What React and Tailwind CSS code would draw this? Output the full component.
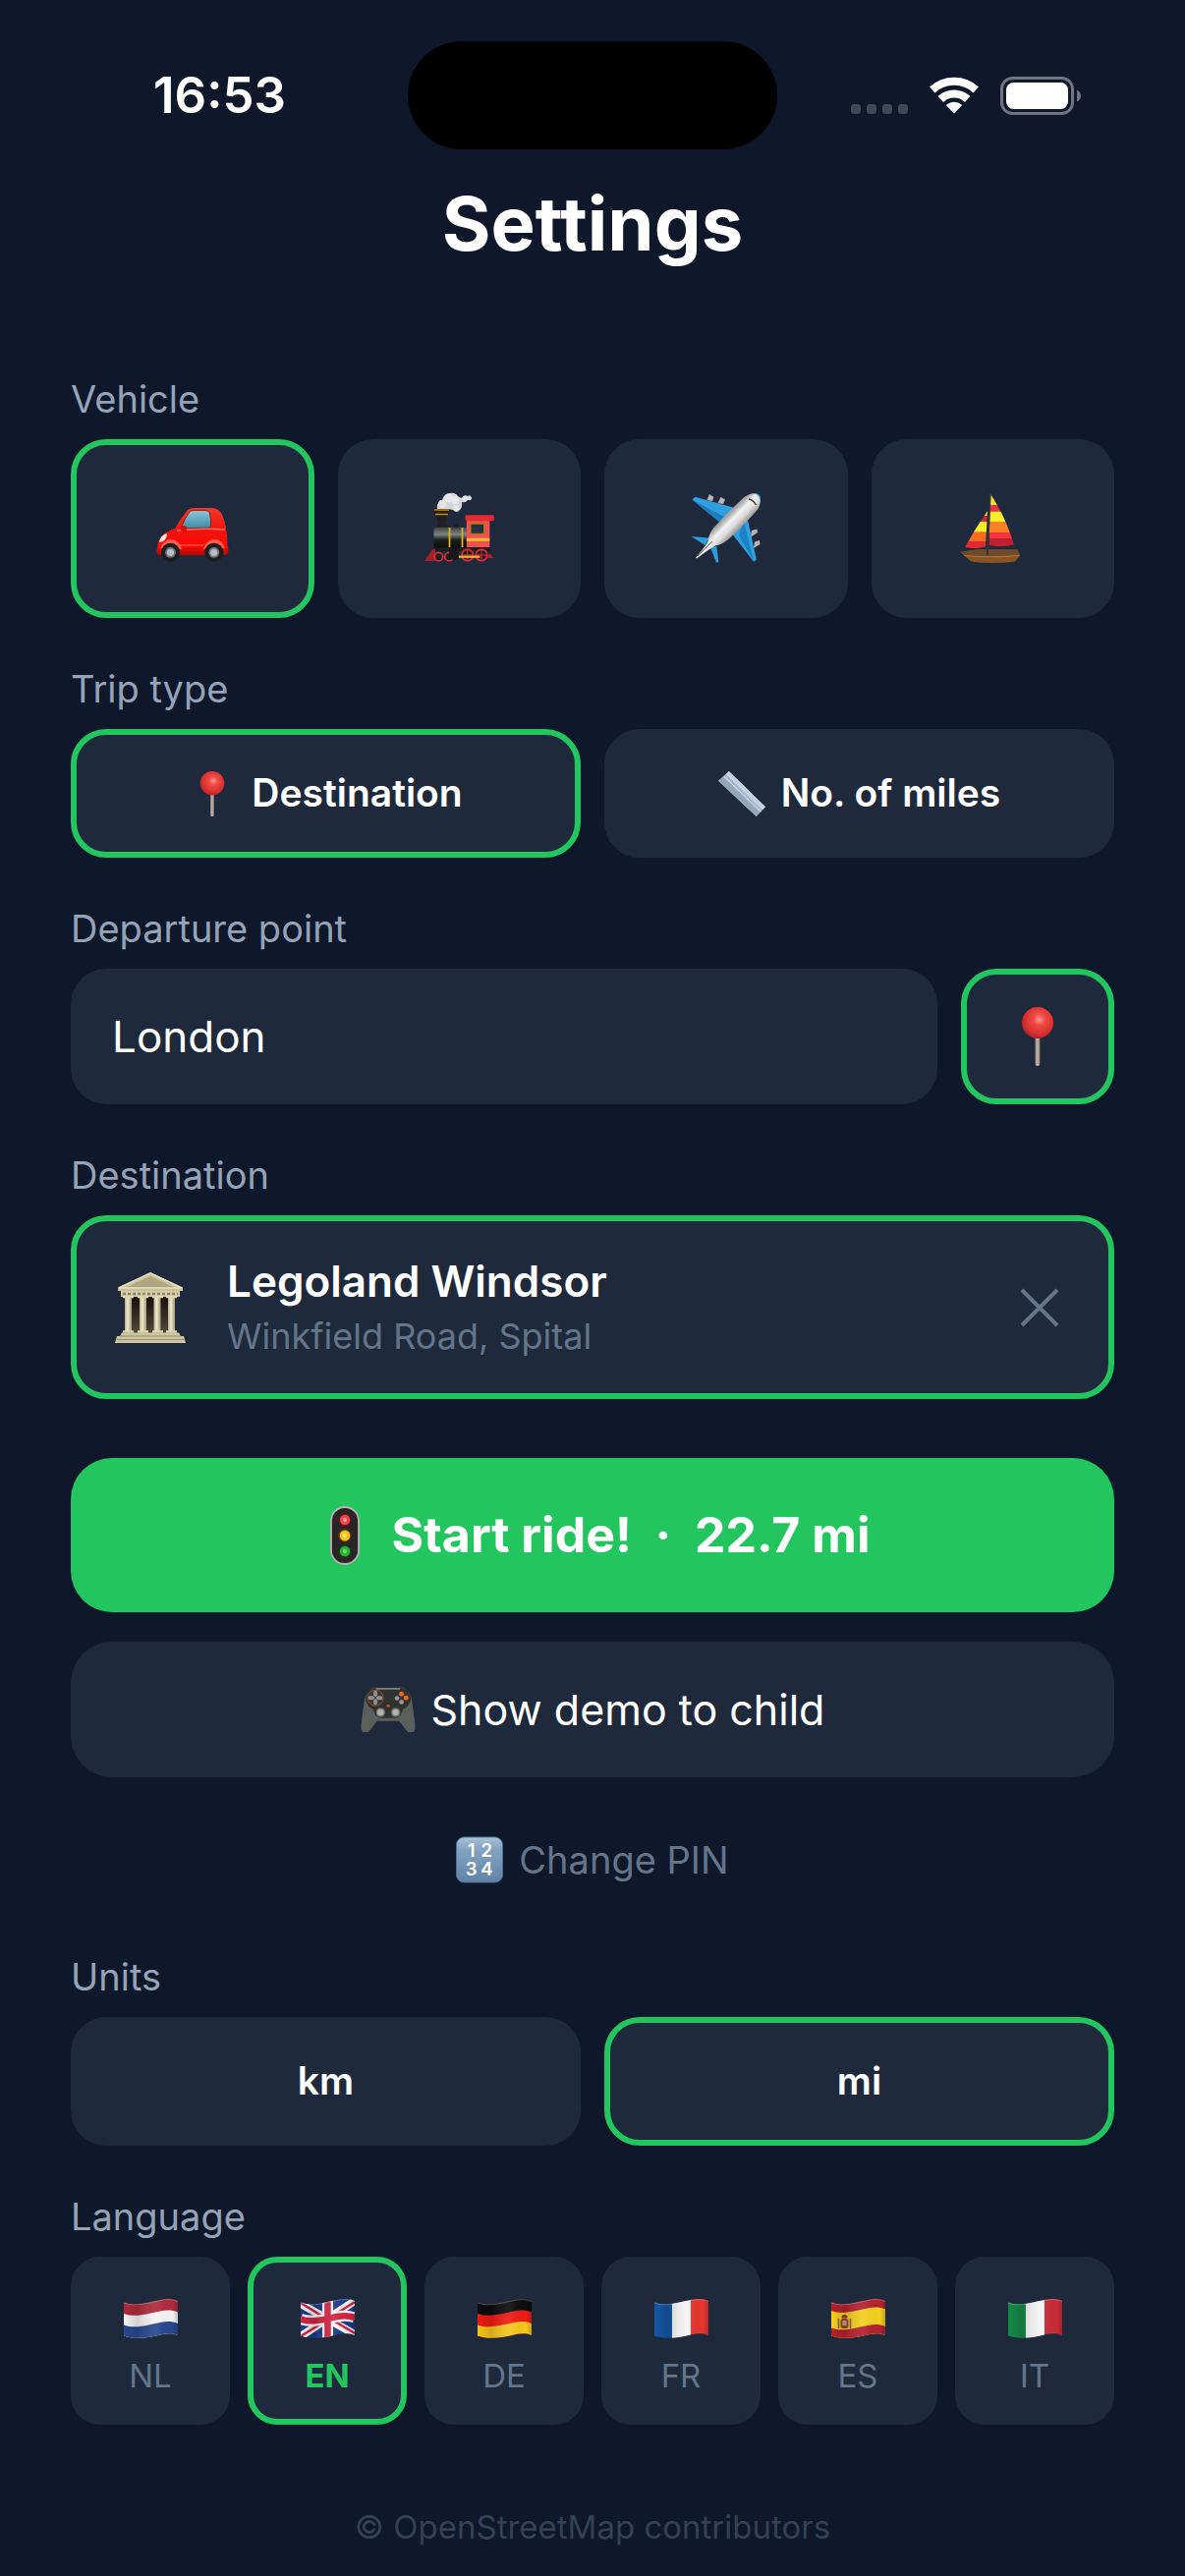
import React, { useState } from 'react';

// wavy top edge of a flag, shifted down by y
const wave = (y) => `M0 ${y + 3.5}C12 ${y + 8} 27 ${y + 3} 38 ${y + 0.8}C45 ${y - 0.5} 50 ${y} 55 ${y + 2}`;

const CarIcon = () => (
  <svg viewBox="0 0 74 74" className="h-[74px] w-[74px]" aria-hidden="true">
    <defs>
      <linearGradient id="carBody" x1="0" y1="0" x2="0" y2="1">
        <stop offset="0" stopColor="#f4382c" />
        <stop offset="0.45" stopColor="#f0140c" />
        <stop offset="0.8" stopColor="#fb0a04" />
        <stop offset="1" stopColor="#b80500" />
      </linearGradient>
      <linearGradient id="carGlass" x1="0" y1="0" x2="0" y2="1">
        <stop offset="0" stopColor="#8fc6d8" />
        <stop offset="1" stopColor="#3d8ba6" />
      </linearGradient>
    </defs>
    <path d="M65 20Q69 26 71 37L64 36Z" fill="#4f9fba" />
    <path d="M19 37Q25 26 32 18Q34 16 40 16H56Q64 16 67 23Q70 30 71 37Q72.500 45 72.500 54Q74 58 73 62Q72 64 67 64H4Q0 64 0.500 59Q1 54 2.500 49Q6 41 19 37Z" fill="url(#carBody)" />
    <path d="M25 37Q29 26 34 20Q35 18.500 38 18.500H50Q53.500 18.500 54.300 21Q56 28 55.500 34Q55.500 36 53 36.200Z" fill="url(#carGlass)" stroke="#7d0f0a" strokeWidth="0.800" />
    <path d="M21 39Q45 36 70 38" stroke="#ff8276" strokeWidth="1.500" fill="none" opacity="0.800" />
    <path d="M24 54H48" stroke="#ff6a58" strokeWidth="1" />
    <path d="M3 51Q4 44 11 42Q11 47 7 50Z" fill="#ffe8e0" />
    <path d="M4 57Q8 48 15 48Q23 48 26 58ZM48 58Q51 48 59 48Q67 48 70 57Z" fill="#ff5a4a" />
    <rect x="25" y="34" width="6" height="6" rx="2.500" fill="#d90e08" />
    <circle cx="14.500" cy="61.300" r="9.600" fill="#1b1d20" />
    <circle cx="14.500" cy="61.300" r="5.500" fill="#6e7276" />
    <circle cx="14.500" cy="61.300" r="3.600" fill="#b9bcc0" />
    <circle cx="58.800" cy="61.300" r="9.600" fill="#1b1d20" />
    <circle cx="58.800" cy="61.300" r="5.500" fill="#6e7276" />
    <circle cx="58.800" cy="61.300" r="3.600" fill="#b9bcc0" />
  </svg>
);

const TrainIcon = () => (
  <svg viewBox="0 0 74 74" className="h-[74px] w-[74px]" aria-hidden="true">
    <defs>
      <linearGradient id="boiler" x1="0" y1="0" x2="0" y2="1">
        <stop offset="0" stopColor="#3c4140" />
        <stop offset="0.35" stopColor="#7b8280" />
        <stop offset="0.6" stopColor="#1c1f1f" />
        <stop offset="1" stopColor="#0b0c0c" />
      </linearGradient>
    </defs>
    <path d="M15 17Q14 10 20 8Q22 1 28 1Q33 0 36 4Q39 7 42 5Q43 2 46 4Q49 2 50 6Q50 9 46 8Q44 11 40 10Q41 15 38 18Q35 22 31 18L26 17Z" fill="#d6d7dc" />
    <g fill="#e6e7ea">
      <circle cx="27" cy="6" r="4.500" />
      <circle cx="33" cy="8" r="4" />
      <circle cx="20" cy="12" r="4" />
      <circle cx="34" cy="16" r="3" />
      <circle cx="43" cy="6" r="2.500" />
      <circle cx="48" cy="6" r="1.500" />
    </g>
    <path d="M12 17H27V22L25 24L23.300 31L25 36H14.500L16 31L14 24L12 22Z" fill="#1d1e1d" />
    <path d="M12 18H27M13 22.500H26" stroke="#c78f1d" strokeWidth="1.300" />
    <rect x="32" y="32" width="5" height="5" rx="2" fill="#1e2020" />
    <rect x="11.500" y="35.700" width="34" height="21" rx="2" fill="url(#boiler)" />
    <path d="M27.500 36V56M40.500 36V56" stroke="#e3b01f" strokeWidth="1.800" />
    <path d="M44.800 28H68.300V56H44.800Z" fill="#f0504f" />
    <rect x="43.700" y="23.300" width="29" height="6" rx="1" fill="#e02b33" />
    <rect x="48.800" y="32" width="14" height="10.500" rx="1.500" fill="#26303c" stroke="#a87818" strokeWidth="1.500" />
    <path d="M44.800 48.300H68.300" stroke="#f4bd2b" strokeWidth="3" />
    <path d="M12 56.500H70V60H12Z" fill="#1f1d1e" />
    <path d="M10 58L2 70H13V58Z" fill="#a3202a" />
    <path d="M68 62L72.500 67H66Z" fill="#b5232c" />
    <g fill="#231a1c" stroke="#dd2f38" strokeWidth="1.700">
      <circle cx="16.500" cy="65.700" r="4.200" />
      <circle cx="27" cy="65.700" r="4.200" />
      <circle cx="45.800" cy="64" r="5.700" />
      <circle cx="60" cy="64" r="5.700" />
    </g>
    <path d="M45.800 58.500V69.500M40.500 64H51M60 58.500V69.500M54.500 64H65.500" stroke="#dd2f38" strokeWidth="1" />
    <rect x="27" y="56.500" width="9.500" height="12" rx="1" fill="#161718" />
    <path d="M37 65.700H58.500" stroke="#f0a722" strokeWidth="2.400" />
  </svg>
);

const PlaneIcon = () => (
  <svg viewBox="0 0 74 74" className="h-[74px] w-[74px]" aria-hidden="true">
    <defs>
      <linearGradient id="fuselage" x1="0.300" y1="0.300" x2="0.700" y2="0.700">
        <stop offset="0.3" stopColor="#a8a6a6" />
        <stop offset="0.45" stopColor="#f3f3f3" />
        <stop offset="0.6" stopColor="#dedddd" />
        <stop offset="0.8" stopColor="#8e8b8a" />
      </linearGradient>
    </defs>
    <g fill="#b9b4b1">
      <path d="M20 2L24.500 5L23 9L17.500 8Z" />
      <path d="M31.500 5L36 7.500L34 12L28.500 11Z" />
      <path d="M63 39L68.500 37.500L69 41L61.500 46Z" />
      <path d="M66 50.500L71 49L71.500 53L65 57Z" />
    </g>
    <path d="M2.500 7.500L5.500 4.800L45 15.700L31 31Z" fill="#2f9fdf" />
    <path d="M3 8L31 31L35 25Z" fill="#1b7fbd" />
    <path d="M59 28L67.800 68.300L65.200 71L42 41Z" fill="#2f9fdf" />
    <path d="M55 29L60 50L65 70L50 44Z" fill="#1b83c2" />
    <path d="M1.500 45L20 46.500L15.500 54Z" fill="#2b9bdc" />
    <path d="M21 56L27.300 55L29.300 71L27 71.800Z" fill="#2b9bdc" />
    <path d="M55.400 5Q64 -1 70 2.500Q74 8 69.500 17Q55 34 41 46.500Q34 53 26 54.500Q21 57 7 67.500L6.200 66.500Q17 54 18.500 50Q19 43 24 36.500Q39 20 55.400 5Z" fill="url(#fuselage)" />
    <path d="M66 1.200Q73 1.500 72 8Q70 3 66 1.200Z" fill="#2f9fdf" />
    <path d="M60 7Q65 8 67.500 13" stroke="#3b3f46" strokeWidth="1.500" fill="none" />
    <path d="M8 65L23 50" stroke="#77736f" strokeWidth="1" />
  </svg>
);

const BoatIcon = () => (
  <svg viewBox="0 0 74 74" className="h-[74px] w-[74px]" aria-hidden="true">
    <defs>
      <clipPath id="mainSail">
        <path d="M35 2Q50 24 59 53.500Q46 56.500 33.500 54Z" />
      </clipPath>
      <clipPath id="jib">
        <path d="M32 19Q20 36 9 56Q19 58.500 30 55.500Z" />
      </clipPath>
    </defs>
    <g clipPath="url(#mainSail)">
      <path d="M30 0H62V13.300H30Z" fill="#f4e22a" />
      <path d="M30 13H62V20H30Z" fill="#e53245" />
      <path d="M30 19.700H62V30H30Z" fill="#fbef2c" />
      <path d="M30 30H62V41H30Z" fill="#fb8124" />
      <path d="M30 41H62V47.500H30Z" fill="#f8333f" />
      <path d="M30 47.300H62V58H30Z" fill="#c11f30" />
    </g>
    <g clipPath="url(#jib)">
      <path d="M5 18H35V24H5Z" fill="#f0d82a" />
      <path d="M5 24H35V30H5Z" fill="#cf2836" />
      <path d="M5 30H35V40.700H5Z" fill="#f8ec2b" />
      <path d="M5 40.700H35V50H5Z" fill="#fa6a20" />
      <path d="M5 50H35V60H5Z" fill="#df2a33" />
    </g>
    <path d="M4.300 60.700L24 58L62.500 58.500L65 64.500L60 70.500Q38 73.500 15.300 70.500Z" fill="#8a5422" />
    <path d="M4.300 60.700L24 58L62.500 58.500L64 63.500Q34 66.500 8 64Z" fill="#6e4a2d" />
    <path d="M8 64.500Q34 67 64.500 64.500" stroke="#b0752f" strokeWidth="1.200" fill="none" />
    <path d="M34.800 2L31.800 64" stroke="#33343a" strokeWidth="1.800" />
  </svg>
);

const PinIcon = ({ className }) => (
  <svg viewBox="0 0 32 60" className={className} aria-hidden="true">
    <defs>
      <radialGradient id="pinHead" cx="0.550" cy="0.400" r="0.600">
        <stop offset="0" stopColor="#ff9a90" />
        <stop offset="0.3" stopColor="#f14b45" />
        <stop offset="0.75" stopColor="#d8312f" />
        <stop offset="1" stopColor="#b02328" />
      </radialGradient>
      <linearGradient id="pinNeedle" x1="0" x2="1">
        <stop offset="0" stopColor="#8f7f78" />
        <stop offset="0.5" stopColor="#c9b7ac" />
        <stop offset="1" stopColor="#7c6c66" />
      </linearGradient>
    </defs>
    <rect x="13.500" y="28" width="5" height="32" rx="2" fill="url(#pinNeedle)" />
    <circle cx="16" cy="16" r="16" fill="url(#pinHead)" />
  </svg>
);

const RulerIcon = () => (
  <svg viewBox="0 0 49 47" className="h-12 w-12" aria-hidden="true">
    <path d="M11 0L49 37L39.500 47L0 10Z" fill="#a9b9cc" />
    <path d="M11 0L49 37L46 40L8 3Z" fill="#c5d2e0" />
    <path d="M5 6L43 43L39.500 47L0 10Z" fill="#94a6bb" />
    <path d="M6 5.500L44.500 42" stroke="#d6e0ea" strokeWidth="1" />
  </svg>
);

const MuseumIcon = () => (
  <svg viewBox="0 0 72 72" className="h-[72px] w-[72px] shrink-0" aria-hidden="true">
    <defs>
      <linearGradient id="column" x1="0" x2="1">
        <stop offset="0" stopColor="#b3ab86" />
        <stop offset="0.4" stopColor="#efead0" />
        <stop offset="1" stopColor="#a59c78" />
      </linearGradient>
      <linearGradient id="interior" x1="0" y1="0" x2="0" y2="1">
        <stop offset="0" stopColor="#15100c" />
        <stop offset="1" stopColor="#55483a" />
      </linearGradient>
    </defs>
    <path d="M12 25H60V62H12Z" fill="url(#interior)" />
    <path d="M36 0L69 15.500V19H3V15.500Z" fill="#c9c19b" />
    <path d="M36 4L60 15.500H12Z" fill="#b0a780" />
    <path d="M36 1L68 16H4Z" fill="none" stroke="#e6dfc0" strokeWidth="1.500" />
    <path d="M6 19H66V25H6Z" fill="#d6cea9" />
    <path d="M8 22H64" stroke="#8d8562" strokeWidth="2.500" strokeDasharray="3 2" />
    <rect x="10" y="25" width="7" height="36" fill="url(#column)" />
    <rect x="25" y="25" width="7" height="36" fill="url(#column)" />
    <rect x="39.500" y="25" width="7" height="36" fill="url(#column)" />
    <rect x="54" y="25" width="7" height="36" fill="url(#column)" />
    <path d="M8 25H19M23 25H34M38 25H49M52 25H63M8 60.500H19M23 60.500H34M38 60.500H49M52 60.500H63" stroke="#ddd6b4" strokeWidth="2.500" />
    <path d="M7 61.500H65L67 65H70L72 72H0L2 65H5Z" fill="#cfc7a2" />
    <path d="M5 65H67M2 68.500H70" stroke="#8d8562" strokeWidth="0.900" />
  </svg>
);

const TrafficLightIcon = () => (
  <svg viewBox="0 0 30 60" className="h-[60px] w-[60px]" aria-hidden="true">
    <rect x="1" y="1" width="28" height="58" rx="14" fill="#2a2426" stroke="#b9b3b6" strokeWidth="1.800" />
    <circle cx="15" cy="14" r="6.500" fill="#5c1519" />
    <circle cx="15" cy="14" r="5.200" fill="#f0434e" />
    <circle cx="15" cy="14" r="2" fill="#ff9d9d" />
    <circle cx="15" cy="30" r="6.500" fill="#6b4a06" />
    <circle cx="15" cy="30" r="5.200" fill="#fbc31b" />
    <circle cx="15" cy="30" r="2" fill="#ffe873" />
    <circle cx="15" cy="46" r="6.500" fill="#0f4417" />
    <circle cx="15" cy="46" r="5.200" fill="#2bb034" />
    <circle cx="15" cy="46" r="2" fill="#72dd70" />
  </svg>
);

const GamepadIcon = () => (
  <svg viewBox="0 0 57 48" className="h-12 w-14" aria-hidden="true">
    <path d="M11 3Q14 -1 17 1.500H40Q43 -1 46 3Q51 5 53 14L56.300 38Q57 47 54.500 47.500H49Q45 43 40 36H17Q12 43 8 47.500H2.500Q0 47 0.700 38L4 14Q6 5 11 3Z" fill="#5b5f5b" />
    <path d="M11 3Q14 -1 17 1.500H40Q43 -1 46 3Q52 6 52 14Q50 21 44 24Q42 32 36 33H21Q15 32 13 24Q7 21 5 14Q5 6 11 3Z" fill="#2f3230" />
    <path d="M16 2.500H41" stroke="#777b77" strokeWidth="2" />
    <circle cx="15.300" cy="12" r="8.200" fill="#363938" stroke="#9a4a22" strokeWidth="1" />
    <path d="M15.300 6.500V17.500M9.800 12H20.800" stroke="#8d908e" strokeWidth="4" strokeLinecap="round" />
    <path d="M13 9.500L17.500 14.500M17.500 9.500L13 14.500" stroke="#3a3d3b" strokeWidth="1" />
    <circle cx="42.300" cy="8" r="2.500" fill="#f4661b" />
    <circle cx="47" cy="12" r="2.500" fill="#f4661b" />
    <circle cx="37.700" cy="12.300" r="2.400" fill="#96999a" />
    <circle cx="42.300" cy="16.300" r="2.400" fill="#96999a" />
    <circle cx="28.700" cy="20.300" r="1.700" fill="#c2551d" />
    <circle cx="20.700" cy="27" r="4.800" fill="#707472" />
    <circle cx="20.700" cy="27" r="3.200" fill="#b1b4b2" />
    <circle cx="36.300" cy="27" r="4.800" fill="#707472" />
    <circle cx="36.300" cy="27" r="3.200" fill="#b1b4b2" />
  </svg>
);

const NumbersIcon = () => (
  <svg viewBox="0 0 49 48" className="h-12 w-12" aria-hidden="true">
    <defs>
      <linearGradient id="numbersBg" x1="0" y1="0" x2="0" y2="1">
        <stop offset="0" stopColor="#a9c2d8" />
        <stop offset="0.25" stopColor="#84a4c1" />
        <stop offset="1" stopColor="#5f83a8" />
      </linearGradient>
    </defs>
    <rect x="0.500" y="0.500" width="48" height="47" rx="8" fill="url(#numbersBg)" stroke="#54718f" />
    <g fill="#fff" fontFamily="Inter, sans-serif" fontSize="19" fontWeight="600" textAnchor="middle">
      <text x="16" y="21">1</text>
      <text x="32" y="21">2</text>
      <text x="16" y="40">3</text>
      <text x="32" y="40">4</text>
    </g>
  </svg>
);

const Stripes = ({ colors }) => (
  <>
    <path d="M0 0H55V40H0Z" fill={colors[0]} />
    <path d={`${wave(11.5)}V40H0Z`} fill={colors[1]} />
    <path d={`${wave(23)}V40H0Z`} fill={colors[2]} />
  </>
);

const Tricolor = ({ left, right }) => (
  <>
    <path d="M0 0H18V40H0Z" fill={left} />
    <path d="M18 0H37V40H18Z" fill="#f4f4f5" />
    <path d="M37 0H55V40H37Z" fill={right} />
  </>
);

const UnionJack = () => (
  <>
    <path d="M0 0H55V40H0Z" fill="#1c3a8a" />
    <path d="M0 5L55 36M0 38L55 2" stroke="#f4f4f5" strokeWidth="8" />
    <path d="M0 4L26 20M30 20L55 35M0 38L26 22M30 19L55 3" stroke="#d22240" strokeWidth="2.600" />
    <path d="M27.500 0V40" stroke="#f4f4f5" strokeWidth="11" />
    <path d={wave(17)} stroke="#f4f4f5" strokeWidth="11" fill="none" />
    <path d="M27.500 0V40" stroke="#d22240" strokeWidth="6.500" />
    <path d={wave(17)} stroke="#d22240" strokeWidth="6.500" fill="none" />
  </>
);

const SpainFlag = () => (
  <>
    <path d="M0 0H55V40H0Z" fill="#b5202f" />
    <path d={`${wave(8.5)}V40H0Z`} fill="#f3cf1f" />
    <path d={`${wave(26)}V40H0Z`} fill="#b5202f" />
    <rect x="9.500" y="20" width="8" height="10" rx="2.500" fill="#a3442c" />
    <rect x="11.500" y="22" width="4" height="5" fill="#b9a5a0" />
    <path d="M10.500 19.500Q10 16 13.500 16Q17 16 16.500 19.500Z" fill="#9a3a22" />
    <path d="M7.500 20V30M19.500 20V30" stroke="#8f5a3c" strokeWidth="1.600" />
  </>
);

const Flag = ({ code, children }) => (
  <svg viewBox="0 0 55 40" className="h-10 w-[55px]" aria-hidden="true">
    <defs>
      <clipPath id={`flag${code}`}>
        <path d={`${wave(0)}V37C50 34.500 45 35 38 36.200C27 39 12 42 0 37.500Z`} />
      </clipPath>
      <linearGradient id={`shade${code}`} x1="0" x2="1">
        <stop offset="0" stopColor="#000" stopOpacity="0" />
        <stop offset="0.25" stopColor="#000" stopOpacity="0.140" />
        <stop offset="0.6" stopColor="#fff" stopOpacity="0.080" />
        <stop offset="0.9" stopColor="#000" stopOpacity="0" />
        <stop offset="1" stopColor="#000" stopOpacity="0.200" />
      </linearGradient>
    </defs>
    <g clipPath={`url(#flag${code})`}>
      {children}
      <path d="M0 0H55V40H0Z" fill={`url(#shade${code})`} />
    </g>
    <path d={wave(0.5)} fill="none" stroke="#fff" strokeOpacity="0.250" />
  </svg>
);

const vehicles = [
  { id: 'car', name: 'Car', icon: <CarIcon /> },
  { id: 'train', name: 'Train', icon: <TrainIcon /> },
  { id: 'plane', name: 'Plane', icon: <PlaneIcon /> },
  { id: 'boat', name: 'Boat', icon: <BoatIcon /> },
];

const languages = [
  { code: 'NL', flag: <Stripes colors={['#ae2a3b', '#f4f4f5', '#27478f']} /> },
  { code: 'EN', flag: <UnionJack /> },
  { code: 'DE', flag: <Stripes colors={['#0c0c0c', '#f01a12', '#f5c61c']} /> },
  { code: 'FR', flag: <Tricolor left="#1455a4" right="#e5352f" /> },
  { code: 'ES', flag: <SpainFlag /> },
  { code: 'IT', flag: <Tricolor left="#158a45" right="#c92b38" /> },
];

const StatusBar = () => (
  <header className="grid grid-cols-[1fr_376px_1fr] items-center pt-[42px]">
    <div className="pl-8 text-center text-[51px] leading-[62px] font-semibold">16:53</div>
    <div className="h-[110px] rounded-full bg-black"></div>
    <div className="flex items-center justify-center gap-[22px] pr-8">
      <svg viewBox="0 0 58 38" className="h-[38px] w-[58px]" fill="#404757" aria-hidden="true">
        <rect x="0" y="28" width="10" height="10" rx="3" />
        <rect x="16" y="28" width="10" height="10" rx="3" />
        <rect x="32" y="28" width="10" height="10" rx="3" />
        <rect x="48" y="28" width="10" height="10" rx="3" />
      </svg>
      <svg viewBox="0 0 50 38" className="h-[38px] w-[50px]" fill="none" stroke="#fff" aria-hidden="true">
        <path d="M2.700 13.500A33 33 0 0 1 47.300 13.500" strokeWidth="8" />
        <path d="M11.300 23A20 20 0 0 1 38.700 23" strokeWidth="8" />
        <path d="M17.800 29A12 12 0 0 1 32.200 29L25 36.500Z" fill="#fff" strokeWidth="1.500" strokeLinejoin="round" />
      </svg>
      <svg viewBox="0 0 82 39" className="h-[39px] w-[82px]" aria-hidden="true">
        <rect x="1.500" y="1.500" width="72" height="36" rx="11" fill="none" stroke="#6e7482" strokeWidth="3" />
        <rect x="6" y="6" width="63" height="27" rx="7.500" fill="#fff" />
        <path d="M78 13.500Q82 15.500 82 19.500Q82 23.500 78 25.500Z" fill="#6e7482" />
      </svg>
    </div>
  </header>
);

const labelClass = "mb-4 block text-[38px] leading-[49px] text-[#94a3b8]";

const Section = ({ title, children, className }) => (
  <section className={className}>
    <h2 className={labelClass}>{title}</h2>
    {children}
  </section>
);

// card-like button with a green border when it is the chosen one
const Option = ({ selected, onClick, label, className, children }) => (
  <button
    type="button"
    aria-pressed={selected}
    aria-label={label}
    onClick={onClick}
    className={`flex items-center justify-center border-[6px] bg-[#1e293b] ${selected ? 'border-[#22c55e]' : 'border-[#1e293b]'} ${className}`}
  >
    {children}
  </button>
);

function App() {
  const [vehicle, setVehicle] = useState('car');
  const [tripType, setTripType] = useState('destination');
  const [departure, setDeparture] = useState('London');
  const [useLocation, setUseLocation] = useState(true);
  const [destination, setDestination] = useState({ name: 'Legoland Windsor', address: 'Winkfield Road, Spital' });
  const [units, setUnits] = useState('mi');
  const [language, setLanguage] = useState('EN');

  return (
    <div className="min-h-screen bg-[#0f172a] font-[Inter,'Liberation_Sans',sans-serif] text-white">
      <StatusBar />
      <main className="px-[72px] pb-[30px]">
        <h1 className="mt-7 text-center text-[76px] leading-[94px] font-bold">Settings</h1>

        <Section title="Vehicle" className="mt-[108px]">
          <div className="grid grid-cols-4 gap-6">
            {vehicles.map((item) => (
              <Option
                key={item.id}
                label={item.name}
                selected={vehicle === item.id}
                onClick={() => setVehicle(item.id)}
                className="h-[182px] rounded-[36px]"
              >
                {item.icon}
              </Option>
            ))}
          </div>
        </Section>

        <Section title="Trip type" className="mt-12">
          <div className="grid grid-cols-2 gap-6 text-[39px] font-semibold">
            <Option selected={tripType === 'destination'} onClick={() => setTripType('destination')} className="h-[131px] gap-4 rounded-[36px]">
              <PinIcon className="h-[46px] w-12" />
              Destination
            </Option>
            <Option selected={tripType === 'miles'} onClick={() => setTripType('miles')} className="h-[131px] gap-4 rounded-[36px]">
              <RulerIcon />
              No. of miles
            </Option>
          </div>
        </Section>

        <section className="mt-12">
          <label htmlFor="departure" className={labelClass}>Departure point</label>
          <div className="flex gap-6">
            <input
              id="departure"
              type="text"
              value={departure}
              onChange={(event) => setDeparture(event.target.value)}
              className="h-[138px] min-w-0 flex-1 rounded-[36px] bg-[#1e293b] px-[42px] text-[44px] outline-none"
            />
            <Option
              label="Use my location"
              selected={useLocation}
              onClick={() => setUseLocation(!useLocation)}
              className="h-[138px] w-[156px] rounded-[36px]"
            >
              <PinIcon className="h-[60px] w-8" />
            </Option>
          </div>
        </section>

        <Section title="Destination" className="mt-12">
          {destination && (
            <div className="flex h-[187px] items-center rounded-[36px] border-[6px] border-[#22c55e] bg-[#1e293b] pr-[50px] pl-[39px]">
              <MuseumIcon />
              <div className="ml-[42px] flex-1">
                <p className="text-[44px] leading-[58px] font-semibold">{destination.name}</p>
                <p className="text-[36px] leading-[54px] text-[#64748b]">{destination.address}</p>
              </div>
              <button type="button" aria-label="Clear destination" onClick={() => setDestination(null)}>
                <svg viewBox="0 0 40 40" className="h-10 w-10" fill="none" stroke="#64748b" strokeWidth="4" aria-hidden="true">
                  <path d="M2 2L38 38M38 2L2 38" />
                </svg>
              </button>
            </div>
          )}
        </Section>

        <button type="button" className="mt-[60px] flex h-[157px] w-full items-center justify-center gap-[18px] rounded-[42px] bg-[#22c55e] text-[50px] font-bold">
          <TrafficLightIcon />
          <span>Start ride!&nbsp; ·&nbsp; 22.7 mi</span>
        </button>
        <button type="button" className="mt-[30px] flex h-[138px] w-full items-center justify-center gap-4 rounded-[42px] bg-[#1e293b] text-[43px]">
          <GamepadIcon />
          Show demo to child
        </button>
        <button type="button" className="mx-auto mt-[60px] flex h-12 items-center gap-4 text-[38px] text-[#64748b]">
          <NumbersIcon />
          Change PIN
        </button>

        <Section title="Units" className="mt-[71px]">
          <div className="grid grid-cols-2 gap-6 text-[39px] font-semibold">
            <Option selected={units === 'km'} onClick={() => setUnits('km')} className="h-[131px] rounded-[36px]">km</Option>
            <Option selected={units === 'mi'} onClick={() => setUnits('mi')} className="h-[131px] rounded-[36px]">mi</Option>
          </div>
        </Section>

        <Section title="Language" className="mt-12">
          <div className="grid grid-cols-6 gap-[18px]">
            {languages.map(({ code, flag }) => (
              <Option
                key={code}
                selected={language === code}
                onClick={() => setLanguage(code)}
                className="h-[171px] flex-col gap-[18px] rounded-[30px] pt-3"
              >
                <Flag code={code}>{flag}</Flag>
                <span className={`text-[33px] leading-10 ${language === code ? 'font-bold text-[#22c55e]' : 'text-[#64748b]'}`}>{code}</span>
              </Option>
            ))}
          </div>
        </Section>

        <p className="mt-[84px] text-center text-[33px] leading-10 text-[#334155]">© OpenStreetMap contributors</p>
      </main>
    </div>
  );
}

export default App;
